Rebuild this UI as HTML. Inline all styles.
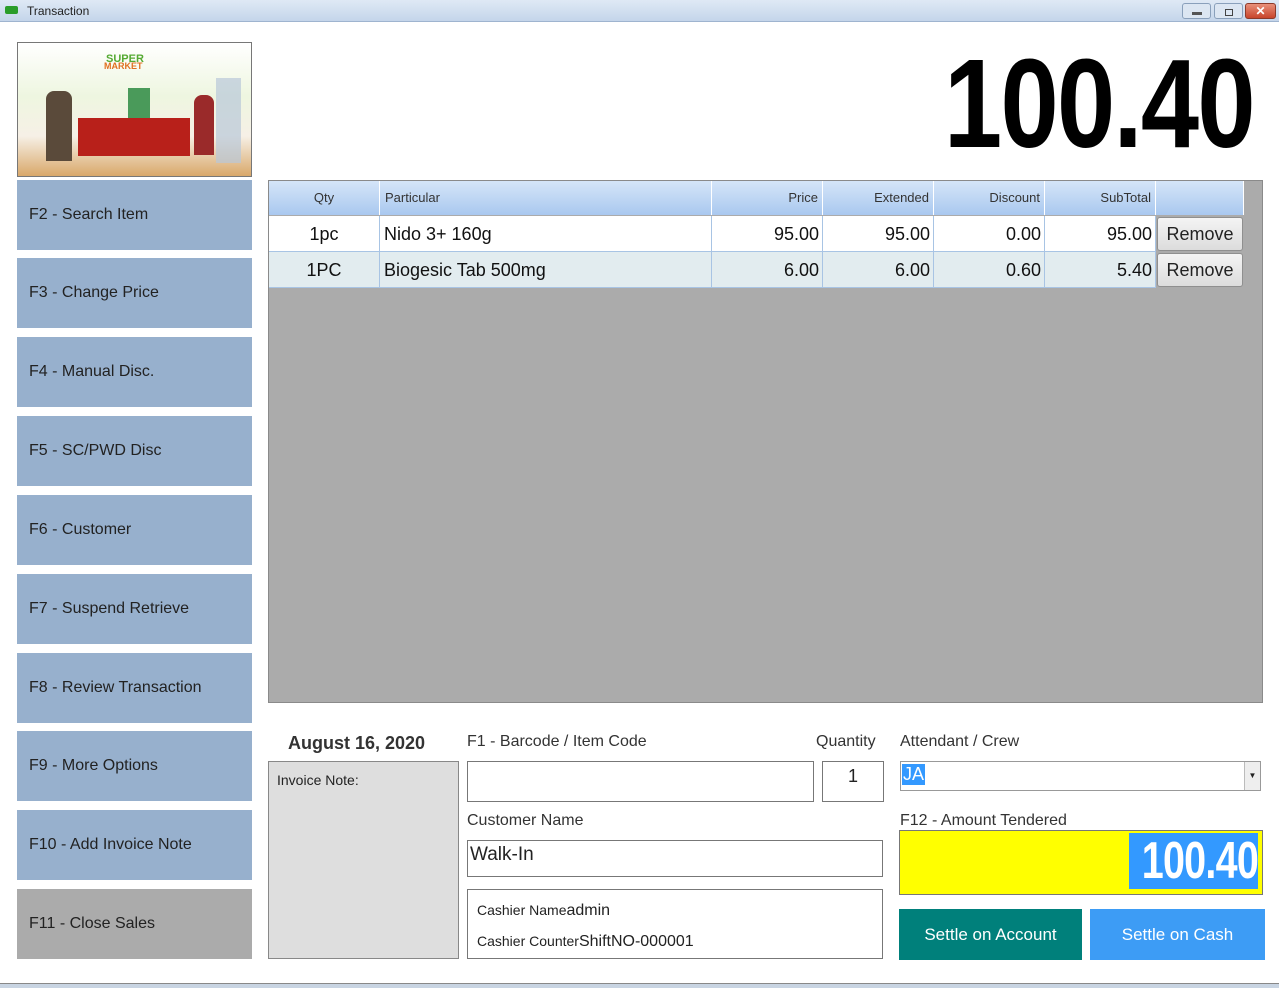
<!DOCTYPE html>
<html><head><meta charset="utf-8"><style>
*{box-sizing:border-box;margin:0;padding:0}
body{width:1279px;height:988px;background:#fff;font-family:"Liberation Sans",sans-serif;position:relative;overflow:hidden;color:#222}
.abs{position:absolute}
.title{left:0;top:0;width:1279px;height:22px;background:linear-gradient(#dfe9f5,#c4d5ea);border-bottom:1px solid #9fb4cf;font-size:12px}
.btn{position:absolute;left:17px;width:235px;height:70px;background:#97b0cd;font-size:16px;padding-left:12px;line-height:70px;color:#222}
.grid{left:268px;top:180px;width:995px;height:523px;background:#ababab;border:1px solid #8a8a8a}
.hdr{position:absolute;top:0;height:34px;background:linear-gradient(#d5e5f8,#a9c8ef);font-size:13px;line-height:34px;border-right:1px solid #fff;color:#333}
.cell{position:absolute;height:36px;line-height:36px;font-size:18px;border-right:1px solid #a8c4e4;color:#111}
.rm{position:absolute;width:86px;height:34px;background:linear-gradient(#f4f4f4,#dcdcdc);border:1px solid #8f8f8f;border-radius:3px;font-size:18px;text-align:center;line-height:32px}
.lbl{font-size:16px;color:#333}
.box{border:1px solid #777;background:#fff}
</style></head><body>
<div class="abs title"><div class="abs" style="left:5px;top:6px;width:13px;height:8px;background:#2a9d2a;border-radius:2px"></div><span class="abs" style="left:27px;top:4px">Transaction</span>
<div class="abs" style="left:1182px;top:3px;width:29px;height:16px;border:1px solid #8aa0bb;border-radius:3px;background:#dce6f2"><div class="abs" style="left:9px;top:8px;width:10px;height:3px;background:#555"></div></div>
<div class="abs" style="left:1214px;top:3px;width:29px;height:16px;border:1px solid #8aa0bb;border-radius:3px;background:#dce6f2"><div class="abs" style="left:10px;top:5px;width:8px;height:7px;border:1px solid #444"></div></div>
<div class="abs" style="left:1245px;top:3px;width:31px;height:16px;border:1px solid #8c3a2a;border-radius:3px;background:linear-gradient(#e8907a,#c8452c);color:#fff;font-weight:bold;font-size:12px;text-align:center;line-height:14px">✕</div>
</div>
<div class="abs" style="left:17px;top:42px;width:235px;height:135px;border:1px solid #777;background:linear-gradient(#fff 0%,#eef6e0 40%,#f6f0e6 70%,#d9a86a 100%);overflow:hidden">
<div class="abs" style="left:88px;top:10px;color:#5a3;font-weight:bold;font-size:11px">SUPER</div>
<div class="abs" style="left:86px;top:18px;color:#e07020;font-weight:bold;font-size:9px">MARKET</div>
<div class="abs" style="left:60px;top:75px;width:112px;height:38px;background:#b8201a"></div>
<div class="abs" style="left:28px;top:48px;width:26px;height:70px;background:#5a4a3a;border-radius:8px 8px 0 0"></div>
<div class="abs" style="left:110px;top:45px;width:22px;height:30px;background:#4a9a5a"></div>
<div class="abs" style="left:176px;top:52px;width:20px;height:60px;background:#9a2a2a;border-radius:8px 8px 0 0"></div>
<div class="abs" style="left:198px;top:35px;width:25px;height:85px;background:#b8c8d8;opacity:.7"></div>
</div>
<div class="btn" style="top:180px">F2 - Search Item</div>
<div class="btn" style="top:258px">F3 - Change Price</div>
<div class="btn" style="top:337px">F4 - Manual Disc.</div>
<div class="btn" style="top:416px">F5 - SC/PWD Disc</div>
<div class="btn" style="top:495px">F6 - Customer</div>
<div class="btn" style="top:574px">F7 - Suspend  Retrieve</div>
<div class="btn" style="top:653px">F8 - Review Transaction</div>
<div class="btn" style="top:731px">F9 - More Options</div>
<div class="btn" style="top:810px">F10 - Add Invoice Note</div>
<div class="btn" style="top:889px;background:#ababab">F11 - Close Sales</div>

<div class="abs" style="left:944px;top:32px;font-size:126px;font-weight:bold;color:#000;transform:scaleX(.83);transform-origin:left top;letter-spacing:-2px;line-height:1.15">100.40</div>

<div class="abs grid">
<div class="hdr" style="left:0;width:111px;text-align:center">Qty</div>
<div class="hdr" style="left:111px;width:332px;padding-left:5px">Particular</div>
<div class="hdr" style="left:443px;width:111px;text-align:right;padding-right:4px">Price</div>
<div class="hdr" style="left:554px;width:111px;text-align:right;padding-right:4px">Extended</div>
<div class="hdr" style="left:665px;width:111px;text-align:right;padding-right:4px">Discount</div>
<div class="hdr" style="left:776px;width:111px;text-align:right;padding-right:4px">SubTotal</div>
<div class="hdr" style="left:887px;width:88px"></div>
<div class="abs" style="left:0;top:35px;width:887px;height:36px;background:#fff;border-bottom:1px solid #a8c4e4"></div>
<div class="abs" style="left:0;top:71px;width:887px;height:36px;background:#e2ecef;border-bottom:1px solid #a8c4e4"></div>
<div class="cell" style="left:0;top:35px;width:111px;text-align:center">1pc</div>
<div class="cell" style="left:111px;top:35px;width:332px;padding-left:4px">Nido 3+ 160g</div>
<div class="cell" style="left:443px;top:35px;width:111px;text-align:right;padding-right:3px">95.00</div>
<div class="cell" style="left:554px;top:35px;width:111px;text-align:right;padding-right:3px">95.00</div>
<div class="cell" style="left:665px;top:35px;width:111px;text-align:right;padding-right:3px">0.00</div>
<div class="cell" style="left:776px;top:35px;width:111px;text-align:right;padding-right:3px">95.00</div>
<div class="cell" style="left:0;top:71px;width:111px;text-align:center">1PC</div>
<div class="cell" style="left:111px;top:71px;width:332px;padding-left:4px">Biogesic Tab 500mg</div>
<div class="cell" style="left:443px;top:71px;width:111px;text-align:right;padding-right:3px">6.00</div>
<div class="cell" style="left:554px;top:71px;width:111px;text-align:right;padding-right:3px">6.00</div>
<div class="cell" style="left:665px;top:71px;width:111px;text-align:right;padding-right:3px">0.60</div>
<div class="cell" style="left:776px;top:71px;width:111px;text-align:right;padding-right:3px">5.40</div>
<div class="rm" style="left:888px;top:36px">Remove</div>
<div class="rm" style="left:888px;top:72px">Remove</div>
</div>

<div class="abs" style="left:288px;top:733px;font-size:18px;font-weight:bold;color:#333">August 16, 2020</div>
<div class="abs" style="left:268px;top:761px;width:191px;height:198px;background:#dedede;border:1px solid #888;font-size:14px;padding:10px 8px">Invoice Note:</div>
<div class="abs lbl" style="left:467px;top:733px">F1 - Barcode / Item Code</div>
<div class="abs lbl" style="left:816px;top:733px">Quantity</div>
<div class="abs lbl" style="left:900px;top:733px">Attendant / Crew</div>
<div class="abs box" style="left:467px;top:761px;width:347px;height:41px"></div>
<div class="abs box" style="left:822px;top:761px;width:62px;height:41px;text-align:center;font-size:18px;padding-top:4px">1</div>
<div class="abs" style="left:900px;top:761px;width:361px;height:30px;border:1px solid #999;background:#fff"><span class="abs" style="left:1px;top:2px;background:#3399ff;color:#fff;font-size:18px;padding:0 1px">JA</span><div class="abs" style="right:0;top:0;width:16px;height:28px;background:#eee;border-left:1px solid #bbb;font-size:8px;text-align:center;line-height:28px">▼</div></div>
<div class="abs lbl" style="left:467px;top:812px">Customer Name</div>
<div class="abs box" style="left:467px;top:840px;width:416px;height:37px;font-size:19px;padding:3px 2px">Walk-In</div>
<div class="abs lbl" style="left:900px;top:812px">F12 - Amount Tendered</div>
<div class="abs" style="left:899px;top:830px;width:364px;height:65px;background:#ffff00;border:1px solid #777"><div class="abs" style="right:4px;top:2px;width:129px;height:56px;background:#3399ff;overflow:hidden"><span class="abs" style="right:0;top:0;color:#fff;font-weight:bold;font-size:52px;line-height:56px;white-space:nowrap;transform:scaleX(.76);transform-origin:right center;letter-spacing:-1px">100.40</span></div></div>
<div class="abs box" style="left:467px;top:889px;width:416px;height:70px;font-size:14px;padding:5px 9px;line-height:30px">Cashier Name<span style="font-size:16px">admin</span><br>Cashier Counter<span style="font-size:16px">ShiftNO-000001</span></div>
<div class="abs" style="left:899px;top:909px;width:183px;height:51px;background:#00807b;color:#fff;font-size:17px;text-align:center;line-height:51px">Settle on Account</div>
<div class="abs" style="left:1090px;top:909px;width:175px;height:51px;background:#3d9cf5;color:#fff;font-size:17px;text-align:center;line-height:51px">Settle on Cash</div>
<div class="abs" style="left:0;top:983px;width:1279px;height:5px;background:#c8d4e2;border-top:1px solid #888"></div>
</body></html>
